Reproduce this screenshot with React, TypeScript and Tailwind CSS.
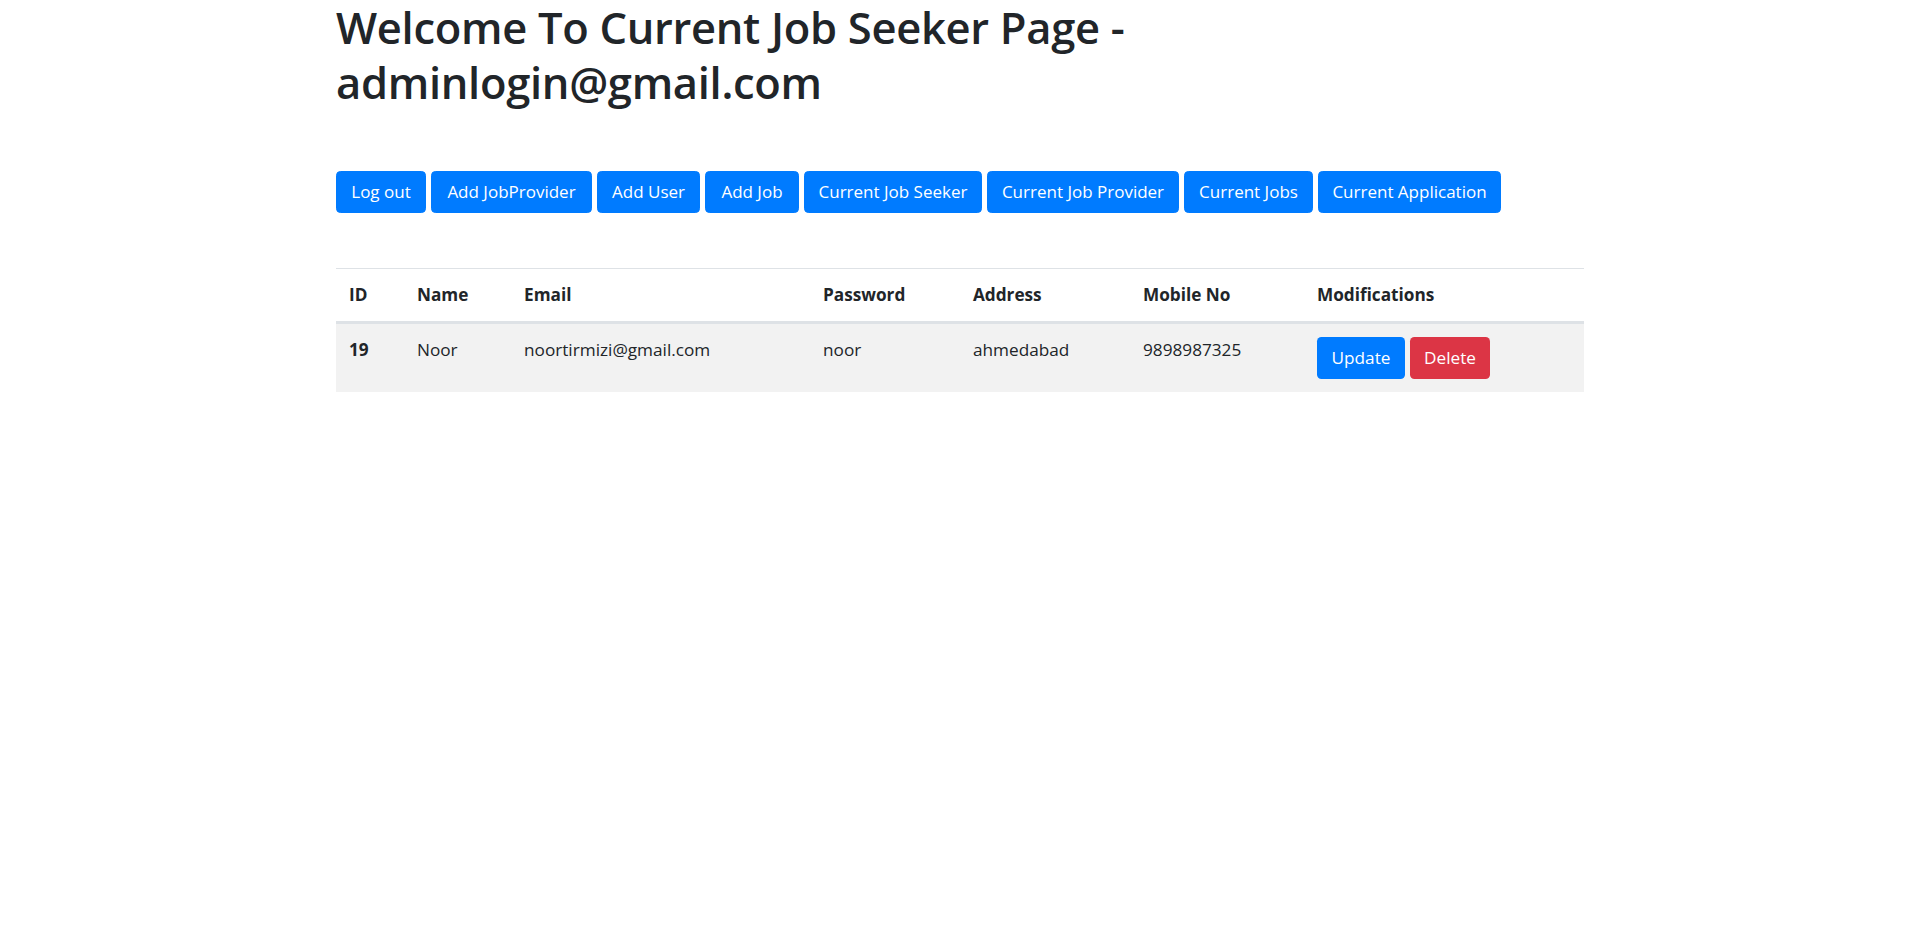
const navButtons = [
  { label: 'Log out', w: 'w-[90px]' },
  { label: 'Add JobProvider', w: 'w-[161px]' },
  { label: 'Add User', w: 'w-[103px]' },
  { label: 'Add Job', w: 'w-[94px]' },
  { label: 'Current Job Seeker', w: 'w-[178px]' },
  { label: 'Current Job Provider', w: 'w-[192px]' },
  { label: 'Current Jobs', w: 'w-[129px]' },
  { label: 'Current Application', w: 'w-[183px]' },
];

const columns = [
  { label: 'ID', w: 'w-[68px]' },
  { label: 'Name', w: 'w-[107px]' },
  { label: 'Email', w: 'w-[299px]' },
  { label: 'Password', w: 'w-[150px]' },
  { label: 'Address', w: 'w-[170px]' },
  { label: 'Mobile No', w: 'w-[174px]' },
  { label: 'Modifications', w: 'w-[280px]' },
];

const seekers = [
  { id: 19, name: 'Noor', email: 'noortirmizi@gmail.com', password: 'noor', address: 'ahmedabad', mobile: '9898987325' },
];

export default function App() {
  return (
    <div className="min-h-screen bg-white text-[#212529] text-[17.6px] leading-[26.4px] font-['Open_Sans','Noto_Sans',sans-serif]">
      <div className="ml-[336px] w-[1248px]">
        {/* Heading */}
        <h1 className="text-[43.5px] leading-[55px] font-semibold tracking-[-0.3px]">
          Welcome To Current Job Seeker Page -
          <br />
          adminlogin@gmail.com
        </h1>

        {/* Nav buttons */}
        <div className="mt-[61px] flex gap-[5px]">
          {navButtons.map((b) => (
            <button
              key={b.label}
              className={`${b.w} h-[42px] whitespace-nowrap rounded-[4.4px] border border-[#007bff] bg-[#007bff] text-center text-[17px] text-white`}
            >
              {b.label}
            </button>
          ))}
        </div>

        {/* Table */}
        <table className="mt-[55px] w-full table-fixed border-collapse text-left">
          <thead>
            <tr>
              {columns.map((c) => (
                <th
                  key={c.label}
                  className={`${c.w} border-t border-b-[3px] border-[#dee2e6] px-[13px] py-[13px] text-[17.2px] font-bold`}
                >
                  {c.label}
                </th>
              ))}
            </tr>
          </thead>
          <tbody>
            {seekers.map((s) => (
              <tr key={s.id} className="bg-[#f2f2f2] align-top text-[17.2px]">
                <th className="px-[13px] py-[13px] font-bold">{s.id}</th>
                <td className="px-[13px] py-[13px]">{s.name}</td>
                <td className="px-[13px] py-[13px]">{s.email}</td>
                <td className="px-[13px] py-[13px]">{s.password}</td>
                <td className="px-[13px] py-[13px]">{s.address}</td>
                <td className="px-[13px] py-[13px]">{s.mobile}</td>
                <td className="px-[13px] py-[13px]">
                  <div className="flex gap-[5px]">
                    <button className="h-[42px] w-[88px] rounded-[4.4px] bg-[#007bff] text-white">Update</button>
                    <button className="h-[42px] w-[80px] rounded-[4.4px] bg-[#dc3545] text-white">Delete</button>
                  </div>
                </td>
              </tr>
            ))}
          </tbody>
        </table>
      </div>
    </div>
  );
}
